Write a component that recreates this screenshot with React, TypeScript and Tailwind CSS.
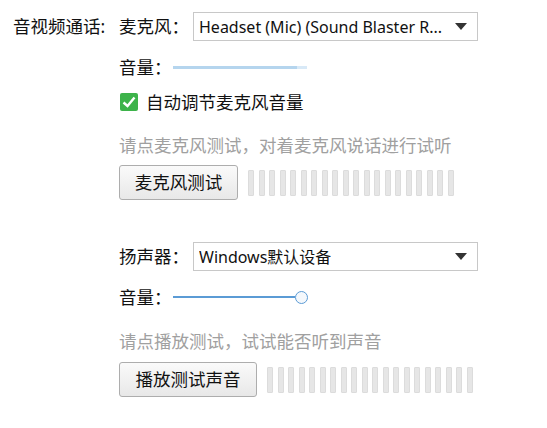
import React from "react";

const FONT = { fontFamily: '"Noto Sans", "Noto Sans CJK SC", sans-serif' };

function Select({ value }: { value: string }) {
  return (
    <div className="flex h-[29px] w-[285px] items-center justify-between border border-[#c8c8c8] bg-white pl-[5px] pr-[10px] text-[16px] text-[#111]">
      <span className="truncate">{value}</span>
      <svg width="12" height="8" viewBox="0 0 12 8">
        <polygon points="0,0 12,0 6,7" fill="#333" />
      </svg>
    </div>
  );
}

function Meter() {
  return (
    <div className="flex h-[26px] gap-[4.5px]">
      {Array.from({ length: 20 }).map((_, i) => (
        <div key={i} className="h-full w-[6px] rounded-[1px] border border-[#dcdcdc] bg-[#e6e6e6]" />
      ))}
    </div>
  );
}

function Slider({ active }: { active: boolean }) {
  if (!active) {
    return (
      <div className="flex w-[134px] items-center">
        <div className="h-[3px] w-[124px] bg-[#b5d5ee]" />
        <div className="h-[3px] w-[10px] bg-[#d8e9f7]" />
      </div>
    );
  }
  return (
    <div className="flex items-center">
      <div className="h-[2px] w-[122px] bg-[#5b9bd5]" />
      <div className="h-[13px] w-[13px] rounded-full border border-[#5b9bd5] bg-[#f4f8fc]" />
    </div>
  );
}

function Button({ label, w }: { label: string; w: string }) {
  return (
    <div
      className={`flex h-[35px] ${w} shrink-0 items-center justify-center rounded-[3px] border border-[#adadad] bg-gradient-to-b from-[#fafafa] to-[#e8e8e8] text-[17.5px] text-[#111]`}
    >
      {label}
    </div>
  );
}

export default function App() {
  return (
    <div className="h-[428px] w-[547px] bg-white pt-[12px] text-[17.5px] text-[#111]" style={FONT}>
      <div className="flex">
        <div className="w-[119px] shrink-0 whitespace-nowrap pl-[13px] pt-[3px] leading-[22px]">音视频通话:</div>
        <div className="flex flex-col">
          <div className="flex items-center gap-[4px]">
            <span className="w-[70px] shrink-0 whitespace-nowrap">麦克风：</span>
            <Select value="Headset (Mic) (Sound Blaster R..." />
          </div>
          <div className="mt-[17px] flex h-[18px] items-center">
            <span className="w-[54px] shrink-0 whitespace-nowrap">音量：</span>
            <Slider active={false} />
          </div>
          <div className="mt-[17px] flex h-[18px] items-center">
            <svg width="18" height="18" viewBox="0 0 18 18" className="mr-[8px] ml-[1px] shrink-0">
              <rect x="0" y="0" width="18" height="18" rx="2" fill="#3db34a" />
              <path d="M3.5 9.5 L7.5 13 L14.5 4.5" stroke="white" strokeWidth="2.4" fill="none" />
            </svg>
            <span className="whitespace-nowrap">自动调节麦克风音量</span>
          </div>
          <div className="mt-[25px] h-[18px] whitespace-nowrap leading-[18px] text-[#a0a0a0]">
            请点麦克风测试，对着麦克风说话进行试听
          </div>
          <div className="mt-[11px] flex items-center gap-[10px]">
            <Button label="麦克风测试" w="w-[119px]" />
            <Meter />
          </div>
          <div className="mt-[42px] flex items-center gap-[4px]">
            <span className="w-[70px] shrink-0 whitespace-nowrap">扬声器：</span>
            <Select value="Windows默认设备" />
          </div>
          <div className="mt-[17px] flex h-[18px] items-center">
            <span className="w-[54px] shrink-0 whitespace-nowrap">音量：</span>
            <Slider active={true} />
          </div>
          <div className="mt-[26px] h-[18px] whitespace-nowrap leading-[18px] text-[#a0a0a0]">
            请点播放测试，试试能否听到声音
          </div>
          <div className="mt-[12px] flex items-center gap-[10px]">
            <Button label="播放测试声音" w="w-[138px]" />
            <Meter />
          </div>
        </div>
      </div>
    </div>
  );
}
